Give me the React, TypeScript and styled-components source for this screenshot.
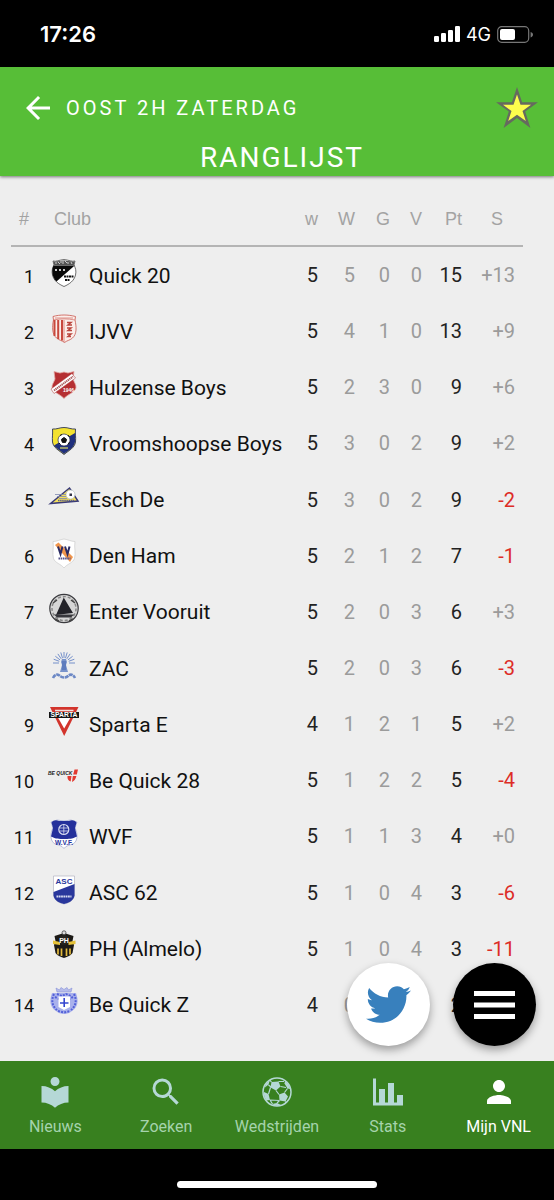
import React from "react";
import styled, { createGlobalStyle } from "styled-components";
import { MdArrowBack, MdLocalLibrary, MdPerson, MdSearch } from "react-icons/md";
import { FaTwitter } from "react-icons/fa";

const GlobalStyle = createGlobalStyle`
  *, *::before, *::after { box-sizing: border-box; }
  body {
    margin: 0;
    background: #eeeeee;
    font-family: Roboto, "Liberation Sans", sans-serif;
  }
  button { border: 0; padding: 0; background: none; font: inherit; color: inherit; cursor: pointer; }
`;

const Screen = styled.div`
  display: flex;
  flex-direction: column;
  min-height: 100vh;
`;

const StatusBar = styled.div`
  display: flex;
  align-items: center;
  justify-content: space-between;
  height: 67px;
  padding: 1px 21px 0 40px;
  background: #000;
  color: #fff;
  font-family: Inter, sans-serif;
`;

const Clock = styled.time`
  font-size: 22px;
  font-weight: 600;
`;

const StatusIcons = styled.div`
  display: flex;
  align-items: center;
  gap: 6px;
  font-size: 18px;
`;

const Header = styled.header`
  position: relative;
  padding: 20px 16px 0 20px;
  background: #57be37;
  color: #fff;
  box-shadow: 0 1px 3px rgba(0, 0, 0, 0.5);
`;

const HeaderRow = styled.div`
  display: flex;
  align-items: center;
  height: 42px;
`;

const IconButton = styled.button`
  display: flex;
`;

const League = styled.p`
  flex: 1;
  margin: 0 0 0 10px;
  font-size: 20px;
  line-height: 24px;
  letter-spacing: 3px;
`;

const Title = styled.h1`
  margin: 11px 0 0;
  padding-left: 6px;
  font-size: 28px;
  font-weight: 400;
  line-height: 36px;
  letter-spacing: 2px;
  text-align: center;
`;

const Main = styled.main`
  position: relative;
  display: flex;
  flex: 1;
  padding: 2px 31px 28px 11px;
`;

const Table = styled.table`
  width: 100%;
  table-layout: fixed;
  border-collapse: separate;
  border-spacing: 0;
`;

const Column = styled.col<{ $width?: number }>`
  width: ${({ $width }) => ($width ? `${$width}px` : "auto")};
`;

const HeadCell = styled.th<{ $align?: string; $pad?: string }>`
  height: 69px;
  padding: ${({ $pad }) => $pad ?? "14px 0 0"};
  border-bottom: 2px solid #b4b4b4;
  color: #a3a3a3;
  font: 400 18px "Liberation Sans", sans-serif;
  line-height: 26px;
  text-align: ${({ $align }) => $align ?? "right"};
`;

type Tone = "strong" | "muted" | "negative";
const tones: Record<Tone, string> = {
  strong: "#222222",
  muted: "#9b9b9b",
  negative: "#dd2c26",
};

const Cell = styled.td<{ $tone: Tone }>`
  padding: 1px 0 0;
  color: ${({ $tone }) => tones[$tone]};
  font-size: 20px;
  line-height: 55px;
  text-align: right;
`;

const ScoreCell = styled(Cell)`
  padding-right: 8px;
`;

const RankCell = styled.td`
  padding: 2px 0 0;
  color: #111;
  font-size: 18px;
  text-align: right;
`;

const ClubCell = styled.td`
  padding: 1px 0 0 15px;
`;

const Club = styled.div`
  display: flex;
  align-items: center;
  gap: 10px;
  color: #111;
  font-size: 21px;
  white-space: nowrap;
`;

const Crest = styled.svg`
  flex: none;
  width: 30px;
  height: 30px;
  margin-bottom: 6px;
  overflow: visible;
`;

const Floating = styled.div`
  position: absolute;
  right: 18px;
  bottom: 15px;
  display: flex;
  gap: 23px;
`;

const RoundButton = styled.button<{ $dark?: boolean }>`
  display: flex;
  align-items: center;
  justify-content: center;
  width: 83px;
  height: 83px;
  border-radius: 50%;
  background: ${({ $dark }) => ($dark ? "#000" : "#fff")};
  color: ${({ $dark }) => ($dark ? "#fff" : "#3880bd")};
  box-shadow: 0 4px 8px rgba(0, 0, 0, 0.35);
`;

const TabBar = styled.nav`
  display: grid;
  grid-template-columns: repeat(5, 1fr);
  height: 88px;
  background: #38801f;
`;

const Tab = styled.a<{ $active?: boolean }>`
  display: flex;
  flex-direction: column;
  align-items: center;
  gap: 9px;
  padding-top: 15px;
  color: ${({ $active }) => ($active ? "#fff" : "#b5d8d6")};
  font-size: 16px;
  line-height: 20px;
  text-decoration: none;
`;

const TabIcon = styled.span`
  display: flex;
  align-items: center;
  height: 32px;
`;

const TabLabel = styled.span<{ $active?: boolean }>`
  color: ${({ $active }) => ($active ? "#fff" : "#a5d3ac")};
`;

const HomeArea = styled.div`
  display: flex;
  justify-content: center;
  height: 51px;
  padding-top: 32px;
  background: #000;
`;

const HomeBar = styled.div`
  width: 36%;
  height: 7px;
  border-radius: 4px;
  background: #fff;
`;

const SignalIcon = () => (
  <svg width="26" height="16" viewBox="0 0 26 16" fill="#fff" aria-hidden="true">
    <rect x="0" y="10" width="5" height="6" rx="1.3" />
    <rect x="7" y="7" width="5" height="9" rx="1.3" />
    <rect x="14" y="4" width="5" height="12" rx="1.3" />
    <rect x="21" y="0" width="5" height="16" rx="1.3" />
  </svg>
);

const BatteryIcon = () => (
  <svg width="36" height="17" viewBox="0 0 36 17" aria-hidden="true">
    <rect x="0.7" y="0.7" width="31" height="15.6" rx="4" fill="none" stroke="#777" strokeWidth="1.2" />
    <rect x="3" y="3" width="15" height="11" rx="2" fill="#fff" />
    <path d="M33.6 6v5.4c1.6-.5 2.4-1.500 2.400-2.700s-.8-2.200-2.400-2.700z" fill="#777" />
  </svg>
);

const StarIcon = () => (
  <svg width="42" height="42" viewBox="0 0 42 42" aria-hidden="true">
    <path d="M21 0l5.100 15.300H42L29.200 24.600 34.400 41 21 31 7.600 41l5.200-16.400L0 15.300h15.900z" fill="#666a5f" />
    <path d="M21 7.500l3.500 10.300h10.500l-8.500 6.200 3.300 10-8.800-6.200-8.800 6.200 3.300-10L7 17.800h10.500z" fill="#fdfd4d" />
  </svg>
);

const MenuIcon = () => (
  <svg width="41" height="28" viewBox="0 0 41 28" fill="currentColor" aria-hidden="true">
    <rect width="41" height="5" />
    <rect y="11.500" width="41" height="5" />
    <rect y="23" width="41" height="5" />
  </svg>
);

const BallIcon = () => (
  <svg width="30" height="30" viewBox="0 0 30 30" aria-hidden="true">
    <circle cx="15" cy="15" r="14" fill="none" stroke="currentColor" strokeWidth="1.500" />
    <g fill="currentColor">
      <path d="M9.500 5l7-.5 2 5-4.500 4-5.500-3z" />
      <path d="M17 17.500l5.500-2 3.500 4-2.500 5-6-1z" />
      <path d="M2 15l4.500 2 1.500 6-3.500.5C2.500 21 1.500 18 2 15z" />
      <path d="M23 4c2.500 2 4.500 4.500 5.300 8L25.500 11.500 22.500 6.500z" />
      <path d="M3.500 7.500L8 3l-1.500 4.500-3.500 3z" />
      <path d="M10 27l5-1 4 2c-3 1-6 1-9-1z" />
    </g>
    <path
      d="M9.500 5L7.500 2.800M16.500 4.500l5.500 0M18.500 9.500l5.500 1M14 13.500l3 4M8.500 10.500l-2 6.500M25.500 11.500l-3 4M17.500 23.500L15 26M8 23l9.500.5M23.500 24.500l.5 1.500M6.500 8L9 10M8 23l2.500 4"
      fill="none"
      stroke="currentColor"
      strokeWidth="1.200"
    />
  </svg>
);

const StatsIcon = () => (
  <svg width="32" height="32" viewBox="0 0 32 32" fill="currentColor" aria-hidden="true">
    <path d="M1 2.500h3v24h27v3H1z" />
    <path d="M7 13h6v14H7zM16 7h6v20h-6zM25 19h6v8h-6z" />
  </svg>
);

const CrestText = ({ x, y, size, fill, children }: { x: number; y: number; size: number; fill: string; children: string }) => (
  <text x={x} y={y} fontSize={size} fontWeight="700" fill={fill} textAnchor="middle" fontFamily="Liberation Sans, sans-serif">
    {children}
  </text>
);

const rays = [-180, -160, -142, -124, -107, -90, -73, -56, -38, -20, 0];
const ray = (deg: number, r1: number, r2: number) => {
  const a = (deg * Math.PI) / 180;
  return `M${15 + Math.cos(a) * r1} ${12 + Math.sin(a) * r1}L${15 + Math.cos(a) * r2} ${12 + Math.sin(a) * r2}`;
};

const crests: Record<string, React.ReactNode> = {
  quick: (
    <>
      <path d="M4 3c3 1 6-1 11-1.500 5 .5 8 2.500 11 1.500l-1 4c1.500 3 2.500 6 1.500 10-1.500 6-6 9-11.500 11.500C9.500 26 5 23 3.500 17c-1-4 0-7 1.500-10z" fill="#fff" stroke="#333" strokeWidth=".7" />
      <path d="M4.500 7.500h21.200L7.500 23.500C2.500 19 2.500 11 4.500 7.500z" fill="#0a0a0a" />
      <path d="M4.500 3.800L15 2.500l10.500 1.300-.8 3.700H5.300z" fill="#555" />
      <path d="M6 5h2m1-1l2 2m1-3v2m2-2v3m2-3l2 2m1-1v2m3-2l1 2" stroke="#ddd" strokeWidth=".9" />
      <path d="M6 11l2 2m0-2l-2 2m4-2l2 2m0-2l-2 2m4-2l2 2m0-2l-2 2" stroke="#fff" strokeWidth=".8" />
      <path d="M15 18.500h10M16 22h5" stroke="#111" strokeWidth="2" strokeDasharray="2 .5" />
    </>
  ),
  ijvv: (
    <>
      <path d="M4 2.500c7-2 15-2 22.500 0L26 6c1.500 7 2 14-2.500 18-2 2-5.500 2.500-8 4.500-2.500-2-6-2.500-8-4.500C3 20 3 13 4.500 6z" fill="#fbeeea" stroke="#c9554d" strokeWidth=".8" />
      <path d="M4.500 6c7-1.500 14-1.500 21.500 0M6 4h18" stroke="#d67a72" strokeWidth=".8" fill="none" />
      <path d="M5.500 6v16M9.200 6v19M13 6v20.500" stroke="#c7483d" strokeWidth="2" />
      <path d="M15 6v22" stroke="#c7483d" strokeWidth=".6" />
      <path d="M18 8.500h4l-3 2.500h4M18 14h4l-3 2.500h4M18 20h4l-3 2.500h3" stroke="#b9443c" strokeWidth="1.500" fill="none" />
    </>
  ),
  hulzense: (
    <>
      <path d="M5 1.500l6 1.500 4-1 4 1 6-1.500L24 9c1 3 3.500 6 3 9-2 5-8 6-12 10.500C11 24 5 23 3 18c-.5-3 2-6 3-9z" fill="#b52f32" stroke="#e3aaa5" strokeWidth=".8" />
      <path d="M2 19L23 3.500l3.500 4.500L5 23.500z" fill="#fff" stroke="#a33" strokeWidth=".5" />
      <path d="M5 20.500L24 6.500" stroke="#a8595a" strokeWidth="2" strokeDasharray="1.300 .6" />
      <CrestText x={19.5} y={21.5} size={5} fill="#fff">1946</CrestText>
    </>
  ),
  vroomshoopse: (
    <>
      <path d="M3.500 3c4 .5 7-1.500 11.500-1.500S22.500 3.500 26.500 3c-.5 4 .5 8 0 13-1 6-6 8-11.500 12.500C9.500 24 4.500 22 3.500 16c-.5-5 .5-9 0-13z" fill="#f3e230" stroke="#2e3558" strokeWidth=".9" />
      <path d="M26 7c0 3 .5 6 0 9-1 6-6 8-11 12-4-3.500-8-5.500-10-8.500z" fill="#20307e" />
      <circle cx="15" cy="14" r="6" fill="#fff" stroke="#222a50" strokeWidth=".7" />
      <path d="M15 11.500l2.600 1.900-1 3h-3.200l-1-3zM11 9.500l2-1M19 9l1.500 2M20.500 16l-1.500 2.500M10 17l1.500 1.500" fill="#111" stroke="#111" strokeWidth="1" />
      <path d="M11 22h8" stroke="#cfcf68" strokeWidth="1.300" />
    </>
  ),
  esch: (
    <>
      <path d="M1.500 21.500L20.500 6l8.500 13z" fill="#f4df5c" stroke="#393a77" strokeWidth="1.500" />
      <circle cx="21.500" cy="12.500" r="4.500" fill="#fff" stroke="#9aa" strokeWidth=".5" />
      <path d="M20.500 11.500h2.500v2.500h-2.500z" fill="#334" />
      <path d="M6 12.500h11M8 14.500h9M10 16.500h8" stroke="#7d88ad" strokeWidth=".8" />
      <path d="M9 18.500h16" stroke="#5b6088" strokeWidth="1.300" strokeDasharray="1.500 .6" />
    </>
  ),
  denham: (
    <>
      <path d="M4 3.500c4 0 7-2 11-2.500 4 .5 7 2.500 11 2.500-1 6 1 12-.5 17C24 25 18 26 15 30c-3-4-9-5-10.500-9.500C3 15.500 5 9.500 4 3.500z" fill="#fff" stroke="#ccc" strokeWidth=".7" />
      <path d="M6 7l3.500-2.500L24 19l-3 5z" fill="#f0954c" />
      <path d="M9 8.500l2.500 7.500 2-7.500M16 8.500l2.500 7.500 2-7.500" fill="none" stroke="#2c2c63" strokeWidth="2" />
      <path d="M9.500 20.500h12" stroke="#55538c" strokeWidth="2" strokeDasharray="1.600 .6" />
    </>
  ),
  enter: (
    <>
      <circle cx="15" cy="14.500" r="14.200" fill="#d6d6d6" stroke="#3a3a3e" strokeWidth="1.200" />
      <circle cx="15" cy="14.500" r="12" fill="none" stroke="#888" strokeWidth="1.500" strokeDasharray="3 2" />
      <path d="M15 3v17l-8 1zM15 4l9 15-9 1z" fill="#222228" />
      <path d="M5 20.500h20l-3 3H8z" fill="#37373c" />
      <path d="M4 9l4-3m14 0l4 3M6 25l4 2m10 0l4-2" stroke="#444" strokeWidth="1.500" />
    </>
  ),
  zac: (
    <>
      {rays.map((deg) => (
        <path key={deg} d={ray(deg, 5, 11)} stroke="#7590ca" strokeWidth="1" />
      ))}
      <path d="M13 8h4l1 3-1 3 2 7h-8l2-7-1-3z" fill="#7893cb" />
      <path d="M14 10v9m2-9v9" stroke="#3a5ca9" strokeWidth=".8" />
      <path d="M4 27c2-4 5-4 7-2 2 2 6 2 8 0 2-2 5-2 7 2" fill="none" stroke="#6c88c5" strokeWidth="2.600" strokeDasharray="4 .6" />
    </>
  ),
  sparta: (
    <>
      <path d="M1 0h28.500L15.200 29z" fill="#d2342c" />
      <path d="M7.500 8h15.500L15.200 21.500z" fill="#fff" />
      <path d="M6 3.500h18.500" stroke="#f2e2df" strokeWidth="1.500" />
      <rect x="0" y="5" width="30" height="6" fill="#151515" />
      <CrestText x={15} y={10.4} size={6.800} fill="#fff">SPARTA</CrestText>
    </>
  ),
  bequick28: (
    <>
      <text x="-1" y="11.500" fontSize="5" fontWeight="700" fontStyle="italic" fill="#222" fontFamily="Liberation Sans, sans-serif">
        BE QUICK
      </text>
      <path d="M25.500 6.500H29l-1.200 5h-3.600z" fill="#e23a31" />
      <path d="M18.500 13h4l-.8 5.500c-2.500-.8-3.500-2.500-3.200-5.500zM23.800 13h3.600c-.7 3-2 5-4.400 6z" fill="#e23a31" />
    </>
  ),
  wvf: (
    <>
      <path d="M2 3l6-2 7 1 7-1 6 2-2 6c3 6 3 13-2 16-3 1-7 1.500-9 4.500-2-3-6-3.500-9-4.500-5-3-5-10-2-16z" fill="#fff" stroke="#8e98cb" strokeWidth=".6" />
      <path d="M2.500 3.500c2-2.500 5-3 7.500-1.500h10c2.500-1.500 5.500-1 7.500 1.500L26 9l2 8.500c-5 2.500-8 2.500-13 2.500S7 20 2 17.500L4 9z" fill="#24309b" />
      <circle cx="14.800" cy="10.500" r="5" fill="none" stroke="#d7daf0" strokeWidth="1.200" />
      <path d="M10.500 9h9M10.500 12h9M14.800 5.500v10" stroke="#d7daf0" strokeWidth=".8" />
      <CrestText x={15} y={26} size={6.5} fill="#24309b">W.V.F.</CrestText>
    </>
  ),
  asc: (
    <>
      <path d="M4.500 1h21v19c-1 6-6 8-10.500 9-4.500-1-9.500-3-10.500-9z" fill="#fff" stroke="#aab" strokeWidth=".6" />
      <path d="M4.500 17L25.500 9v11.500c-1 5.500-6 7.500-10.500 8.500-4.500-1-9.500-3-10.500-8.500z" fill="#29379c" />
      <CrestText x={15} y={9} size={8} fill="#29379c">ASC</CrestText>
      <path d="M7.500 21.500h15" stroke="#d5d9ef" strokeWidth="2" strokeDasharray="1.800 .5" />
    </>
  ),
  ph: (
    <>
      <path d="M5.500 5L15 2l9.500 3-1 5 1.500 4-1.500 8c-2 3-6 4-8.500 5-2.500-1-6.500-2-8.500-5L5 14l1.500-4z" fill="#1c1a16" />
      <path d="M4 9.500l7 1.500v3l-7-1zM26.500 9.500l-7 1.500v3l7-1z" fill="#e5c23a" />
      <path d="M9 17.500v6M12.500 17.500V25M17.500 17.500V25M21 17.500v6" stroke="#e2ba3e" strokeWidth="1.700" />
      <circle cx="15" cy="9" r="5" fill="#26241f" />
      <CrestText x={15} y={11.5} size={7} fill="#fff">PH</CrestText>
      <circle cx="15" cy="1.800" r="2" fill="#ddd" stroke="#333" strokeWidth=".7" />
    </>
  ),
  bequickz: (
    <>
      <path d="M8 5L7 1l3.500 2L12 .5l3 2 3-2 1.500 2.500L23 1l-1 4z" fill="#b7bdea" stroke="#8791d8" strokeWidth=".6" />
      <path d="M3 6h24c3 8 2 14-4 18-4 4-12 4-16 0C1 20 0 14 3 6z" fill="#a9b1ec" />
      <path d="M5 7c-3 6-2 12 3 16M25 7c3 6 2 12-3 16M8 7l5 2 4-2 5 2M6 10l4 2m14-2l-4 2M9 24l6 1.500 6-1.500" fill="none" stroke="#5260d8" strokeWidth="2" strokeDasharray="2 1.200" />
      <path d="M9.500 9.500H21V20l-6 3-5.500-3z" fill="#fff" />
      <path d="M15.200 11v9M11 16h8.500" stroke="#3445cf" strokeWidth="1.600" />
    </>
  ),
};

type Standing = [crest: string, club: string, played: number, won: number, drawn: number, lost: number, points: number, balance: string];

const standings: Standing[] = [
  ["quick", "Quick 20", 5, 5, 0, 0, 15, "+13"],
  ["ijvv", "IJVV", 5, 4, 1, 0, 13, "+9"],
  ["hulzense", "Hulzense Boys", 5, 2, 3, 0, 9, "+6"],
  ["vroomshoopse", "Vroomshoopse Boys", 5, 3, 0, 2, 9, "+2"],
  ["esch", "Esch De", 5, 3, 0, 2, 9, "-2"],
  ["denham", "Den Ham", 5, 2, 1, 2, 7, "-1"],
  ["enter", "Enter Vooruit", 5, 2, 0, 3, 6, "+3"],
  ["zac", "ZAC", 5, 2, 0, 3, 6, "-3"],
  ["sparta", "Sparta E", 4, 1, 2, 1, 5, "+2"],
  ["bequick28", "Be Quick 28", 5, 1, 2, 2, 5, "-4"],
  ["wvf", "WVF", 5, 1, 1, 3, 4, "+0"],
  ["asc", "ASC 62", 5, 1, 0, 4, 3, "-6"],
  ["ph", "PH (Almelo)", 5, 1, 0, 4, 3, "-11"],
  ["bequickz", "Be Quick Z", 4, 0, 2, 2, 2, "-3"],
];

const tabs = [
  { label: "Nieuws", icon: <MdLocalLibrary size={36} /> },
  { label: "Zoeken", icon: <MdSearch size={36} /> },
  { label: "Wedstrijden", icon: <BallIcon /> },
  { label: "Stats", icon: <StatsIcon /> },
  { label: "Mijn VNL", icon: <MdPerson size={36} />, active: true },
];

export default function App() {
  return (
    <Screen>
      <GlobalStyle />
      <StatusBar>
        <Clock>17:26</Clock>
        <StatusIcons>
          <SignalIcon />
          <span>4G</span>
          <BatteryIcon />
        </StatusIcons>
      </StatusBar>
      <Header>
        <HeaderRow>
          <IconButton aria-label="Terug">
            <MdArrowBack size={36} />
          </IconButton>
          <League>OOST 2H ZATERDAG</League>
          <IconButton aria-label="Favoriet">
            <StarIcon />
          </IconButton>
        </HeaderRow>
        <Title>RANGLIJST</Title>
      </Header>
      <Main>
        <Table>
          <colgroup>
            <Column $width={23} />
            <Column />
            <Column $width={37} />
            <Column $width={37} />
            <Column $width={35} />
            <Column $width={32} />
            <Column $width={40} />
            <Column $width={61} />
          </colgroup>
          <thead>
            <tr>
              <HeadCell $pad="14px 5px 0 0">#</HeadCell>
              <HeadCell $align="left" $pad="14px 0 0 20px">Club</HeadCell>
              <HeadCell>w</HeadCell>
              <HeadCell>W</HeadCell>
              <HeadCell>G</HeadCell>
              <HeadCell>V</HeadCell>
              <HeadCell>Pt</HeadCell>
              <HeadCell $pad="14px 20px 0 0">S</HeadCell>
            </tr>
          </thead>
          <tbody>
            {standings.map(([crest, club, played, won, drawn, lost, points, balance], index) => (
              <tr key={club}>
                <RankCell>{index + 1}</RankCell>
                <ClubCell>
                  <Club>
                    <Crest viewBox="0 0 30 30" aria-hidden="true">{crests[crest]}</Crest>
                    {club}
                  </Club>
                </ClubCell>
                <Cell $tone="strong">{played}</Cell>
                <Cell $tone="muted">{won}</Cell>
                <Cell $tone="muted">{drawn}</Cell>
                <Cell $tone="muted">{lost}</Cell>
                <Cell $tone="strong">{points}</Cell>
                <ScoreCell $tone={balance.startsWith("-") ? "negative" : "muted"}>{balance}</ScoreCell>
              </tr>
            ))}
          </tbody>
        </Table>
        <Floating>
          <RoundButton aria-label="Twitter">
            <FaTwitter size={45} />
          </RoundButton>
          <RoundButton $dark aria-label="Menu">
            <MenuIcon />
          </RoundButton>
        </Floating>
      </Main>
      <TabBar>
        {tabs.map(({ label, icon, active }) => (
          <Tab key={label} href="#" $active={active} aria-current={active ? "page" : undefined}>
            <TabIcon>{icon}</TabIcon>
            <TabLabel $active={active}>{label}</TabLabel>
          </Tab>
        ))}
      </TabBar>
      <HomeArea>
        <HomeBar />
      </HomeArea>
    </Screen>
  );
}
